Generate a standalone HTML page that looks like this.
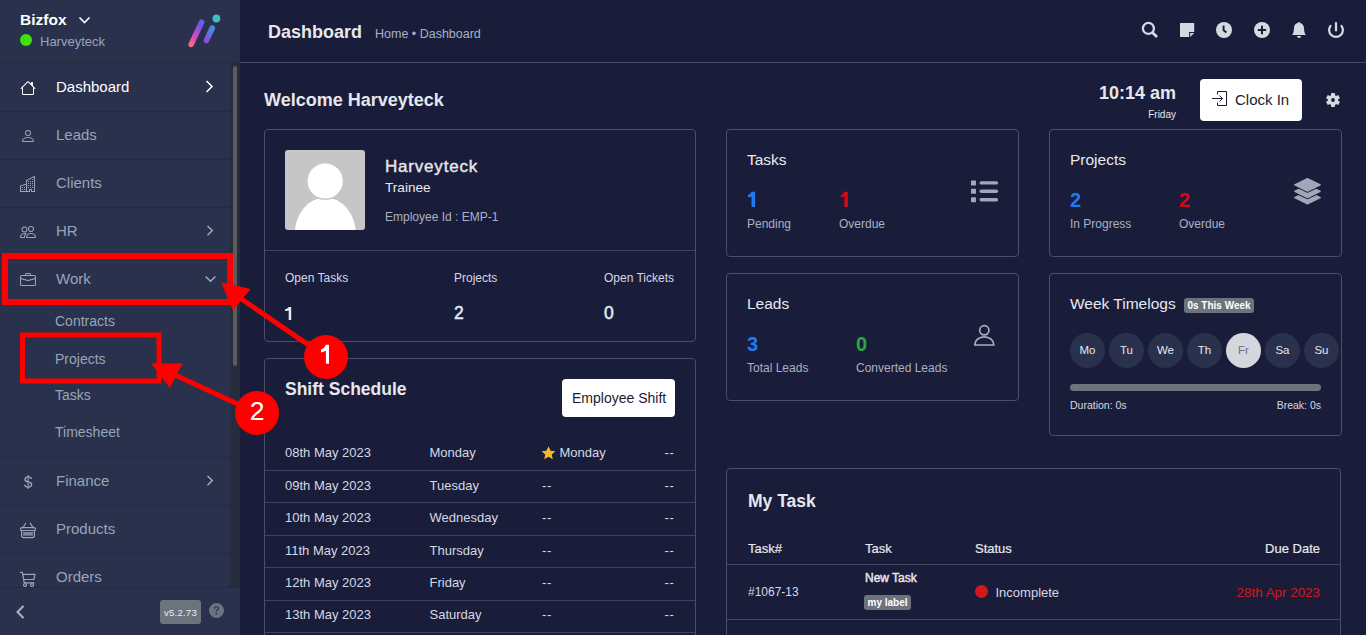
<!DOCTYPE html>
<html><head><meta charset="utf-8">
<style>
*{box-sizing:border-box;margin:0;padding:0}
html,body{width:1366px;height:635px;overflow:hidden;background:#1a1d39;font-family:"Liberation Sans",sans-serif;position:relative}
.a{position:absolute;white-space:nowrap;line-height:1}
svg{position:absolute;overflow:visible}
#sb{position:absolute;left:0;top:0;width:240px;height:635px;background:#29314d}
.sep{position:absolute;left:0;width:230px;height:1px;background:#252a3d}
.mt{position:absolute;left:56px;font-size:15px;line-height:1;color:#99a5b8;white-space:nowrap}
.st{position:absolute;left:55px;font-size:14px;line-height:1;color:#99a5b8;white-space:nowrap}
.ic{fill:#99a5b8}
.card{position:absolute;border:1px solid #4b4e6b;border-radius:4px}
.lt{color:#d5d8e4}
.ttl{font-size:15.5px;color:#e6e8ef}
.num{font-size:20px;font-weight:bold}
.lbl{font-size:12px;color:#a9b1c4}
.day{position:absolute;top:333px;width:35px;height:35px;border-radius:50%;background:#29314d;color:#e4e7ee;font-size:11.5px;line-height:34px;text-align:center}
.row{position:absolute;font-size:13px;color:#d5d8e4;line-height:1}
.rl{position:absolute;left:265px;width:430px;height:1px;background:#3c3f5c}
</style></head><body>
<div id="sb">
  <div class="a" style="left:20px;top:12px;font-size:15.5px;font-weight:bold;color:#fff">Bizfox</div>
  <svg style="left:78px;top:16px" width="13" height="9" viewBox="0 0 13 9"><path d="M1.5 1.5 L6.5 6.5 L11.5 1.5" fill="none" stroke="#fff" stroke-width="1.6"/></svg>
  <div class="a" style="left:20px;top:34px;width:12px;height:12px;border-radius:50%;background:#3ee10a"></div>
  <div class="a" style="left:40px;top:35px;font-size:13px;color:#99a5b8">Harveyteck</div>
  <!-- logo -->
  <svg style="left:180px;top:10px" width="50" height="42" viewBox="0 0 50 42">
    <defs>
      <linearGradient id="g1" x1="0" y1="1" x2="0.6" y2="0"><stop offset="0" stop-color="#f46b7a"/><stop offset="0.35" stop-color="#d948c0"/><stop offset="1" stop-color="#6a5ae6"/></linearGradient>
      <linearGradient id="g2" x1="0" y1="1" x2="0.6" y2="0"><stop offset="0" stop-color="#8a4ee0"/><stop offset="1" stop-color="#4a86e0"/></linearGradient>
    </defs>
    <line x1="11.2" y1="34.4" x2="21.6" y2="12.2" stroke="url(#g1)" stroke-width="5.6" stroke-linecap="round"/>
    <line x1="26.5" y1="30.4" x2="32.3" y2="18.0" stroke="url(#g2)" stroke-width="5.6" stroke-linecap="round"/>
    <circle cx="36.4" cy="8.5" r="3.9" fill="#3cc0c0"/>
  </svg>
  <div class="a" style="left:0;top:62px;width:240px;height:1px;background:#252a3a"></div>

  <!-- menu items -->
  <svg style="left:19.5px;top:79.5px" width="16" height="16" viewBox="0 0 16 16"><path fill="#fff" d="M8.707 1.5a1 1 0 0 0-1.414 0L.646 8.146a.5.5 0 0 0 .708.708L2 8.207V13.5A1.5 1.5 0 0 0 3.5 15h9a1.5 1.5 0 0 0 1.5-1.5V8.207l.646.647a.5.5 0 0 0 .708-.708L13 5.793V2.5a.5.5 0 0 0-.5-.5h-1a.5.5 0 0 0-.5.5v1.293L8.707 1.5ZM13 7.207V13.5a.5.5 0 0 1-.5.5h-9a.5.5 0 0 1-.5-.5V7.207l5-5 5 5Z"/></svg>
  <div class="mt" style="top:79px;color:#fff">Dashboard</div>
  <svg style="left:205px;top:80px" width="10" height="13" viewBox="0 0 10 13"><path d="M1.5 1 L7 6.5 L1.5 12" fill="none" stroke="#fff" stroke-width="1.5"/></svg>
  <div class="sep" style="top:111px"></div>

  <svg style="left:20px;top:128px" width="16" height="16" viewBox="0 0 16 16"><path class="ic" d="M8 8a3 3 0 1 0 0-6 3 3 0 0 0 0 6Zm2-3a2 2 0 1 1-4 0 2 2 0 0 1 4 0Zm4 8c0 1-1 1-1 1H3s-1 0-1-1 1-4 6-4 6 3 6 4Zm-1-.004c-.001-.246-.154-.986-.832-1.664C11.516 10.68 10.289 10 8 10c-2.29 0-3.516.68-4.168 1.332-.678.678-.83 1.418-.832 1.664h10Z"/></svg>
  <div class="mt" style="top:127px">Leads</div>
  <div class="sep" style="top:159px"></div>

  <svg style="left:20px;top:176px" width="16" height="16" viewBox="0 0 16 16"><path class="ic" d="M14.763.075A.5.5 0 0 1 15 .5v15a.5.5 0 0 1-.5.5h-3a.5.5 0 0 1-.5-.5V14h-1v1.5a.5.5 0 0 1-.5.5h-9a.5.5 0 0 1-.5-.5V10a.5.5 0 0 1 .342-.474L6 7.64V4.5a.5.5 0 0 1 .276-.447l8-4a.5.5 0 0 1 .487.022ZM6 8.694 1 10.36V15h5V8.694ZM7 15h2v-1.5a.5.5 0 0 1 .5-.5h2a.5.5 0 0 1 .5.5V15h2V1.309l-7 3.5V15Z"/><path class="ic" d="M2 11h1v1H2v-1Zm2 0h1v1H4v-1Zm-2 2h1v1H2v-1Zm2 0h1v1H4v-1Zm4-4h1v1H8V9Zm2 0h1v1h-1V9Zm-2 2h1v1H8v-1Zm2 0h1v1h-1v-1Zm2-2h1v1h-1V9Zm0 2h1v1h-1v-1ZM8 7h1v1H8V7Zm2 0h1v1h-1V7Zm2 0h1v1h-1V7ZM8 5h1v1H8V5Zm2 0h1v1h-1V5Zm2 0h1v1h-1V5Zm0-2h1v1h-1V3Z"/></svg>
  <div class="mt" style="top:175px">Clients</div>
  <div class="sep" style="top:207px"></div>

  <svg style="left:20px;top:224px" width="16" height="16" viewBox="0 0 16 16"><path class="ic" d="M15 14s1 0 1-1-1-4-5-4-5 3-5 4 1 1 1 1h8Zm-7.978-1A.261.261 0 0 1 7 12.996c.001-.264.167-1.03.76-1.72C8.312 10.629 9.282 10 11 10c1.717 0 2.687.63 3.24 1.276.593.69.758 1.457.76 1.72l-.008.002a.274.274 0 0 1-.014.002H7.022ZM11 7a2 2 0 1 0 0-4 2 2 0 0 0 0 4Zm3-2a3 3 0 1 1-6 0 3 3 0 0 1 6 0ZM6.936 9.28a5.88 5.88 0 0 0-1.23-.247A7.35 7.35 0 0 0 5 9c-4 0-5 3-5 4 0 .667.333 1 1 1h4.216A2.238 2.238 0 0 1 5 13c0-1.01.377-2.042 1.09-2.904.243-.294.526-.569.846-.816ZM4.92 10A5.493 5.493 0 0 0 4 13H1c0-.26.164-1.03.76-1.724.545-.636 1.492-1.256 3.16-1.275ZM1.5 5.5a3 3 0 1 1 6 0 3 3 0 0 1-6 0Zm3-2a2 2 0 1 0 0 4 2 2 0 0 0 0-4Z"/></svg>
  <div class="mt" style="top:223px">HR</div>
  <svg style="left:206px;top:225px" width="10" height="13" viewBox="0 0 10 13"><path d="M1.5 1 L6.3 5.6 L1.5 10.2" fill="none" stroke="#a3b0c4" stroke-width="1.4"/></svg>
  <div class="sep" style="top:255px"></div>

  <svg style="left:20px;top:272px" width="16" height="16" viewBox="0 0 16 16"><path class="ic" d="M6.5 1A1.5 1.5 0 0 0 5 2.5V3H1.5A1.5 1.5 0 0 0 0 4.5v8A1.5 1.5 0 0 0 1.5 14h13a1.5 1.5 0 0 0 1.5-1.5v-8A1.5 1.5 0 0 0 14.5 3H11v-.5A1.5 1.5 0 0 0 9.5 1h-3zm0 1h3a.5.5 0 0 1 .5.5V3H6v-.5a.5.5 0 0 1 .5-.5zm1.886 6.914L15 7.151V12.5a.5.5 0 0 1-.5.5h-13a.5.5 0 0 1-.5-.5V7.15l6.614 1.764a1.5 1.5 0 0 0 .772 0zM1.5 4h13a.5.5 0 0 1 .5.5v1.616L8.129 7.948a.5.5 0 0 1-.258 0L1 6.116V4.5a.5.5 0 0 1 .5-.5z"/></svg>
  <div class="mt" style="top:271px">Work</div>
  <svg style="left:203.5px;top:274.5px" width="14" height="9" viewBox="0 0 14 9"><path d="M1.6 1.5 L6.5 6.3 L11.4 1.5" fill="none" stroke="#a3b0c4" stroke-width="1.4"/></svg>

  <div class="st" style="top:314px">Contracts</div>
  <div class="st" style="top:352px">Projects</div>
  <div class="st" style="top:388px">Tasks</div>
  <div class="st" style="top:425px">Timesheet</div>
  <div class="sep" style="top:457px"></div>

  <svg style="left:20px;top:474px" width="16" height="16" viewBox="0 0 16 16"><path class="ic" d="M4 10.781c.148 1.667 1.513 2.85 3.591 3.003V15h1.043v-1.216c2.27-.179 3.678-1.438 3.678-3.3 0-1.59-.947-2.51-2.956-3.028l-.722-.187V3.467c1.122.11 1.879.714 2.07 1.616h1.47c-.166-1.6-1.54-2.748-3.54-2.875V1H7.591v1.233c-1.939.23-3.27 1.472-3.27 3.156 0 1.454.966 2.483 2.661 2.917l.61.162v4.031c-1.149-.17-1.94-.8-2.131-1.718H4zm3.391-3.836c-1.043-.263-1.6-.825-1.6-1.616 0-.944.704-1.641 1.8-1.828v3.495l-.2-.05zm1.591 1.872c1.287.323 1.852.859 1.852 1.769 0 1.097-.826 1.828-2.103 2.001V8.225l.251.063z"/></svg>
  <div class="mt" style="top:473px">Finance</div>
  <svg style="left:206px;top:475px" width="10" height="13" viewBox="0 0 10 13"><path d="M1.5 1 L6.3 5.6 L1.5 10.2" fill="none" stroke="#a3b0c4" stroke-width="1.4"/></svg>
  <div class="sep" style="top:505px"></div>

  <svg style="left:20px;top:522px" width="16" height="17" viewBox="0 0 16 17"><g fill="none" stroke="#99a5b8" stroke-width="1.2" stroke-linecap="round"><path d="M5.6 1.2 L3 5.7 M10.2 1.2 L13.1 5.7"/><rect x="0.6" y="5.7" width="14.8" height="2.8" rx="1"/><path d="M1.6 8.5 V13.6 a2 2 0 0 0 2 2 H12.4 a2 2 0 0 0 2 -2 V8.5"/></g><rect x="3.2" y="10" width="9.7" height="3.7" fill="#7d879b"/></svg>
  <div class="mt" style="top:521px">Products</div>
  <div class="sep" style="top:553px"></div>

  <svg style="left:20px;top:570px" width="16" height="18" viewBox="0 0 16 18"><g fill="none" stroke="#99a5b8" stroke-width="1.2" stroke-linejoin="round" stroke-linecap="round"><path d="M0.5 2.4 H2.4 L4.3 12.8 H14"/><path d="M3 4.4 H15 L13.8 9.5 H4"/><circle cx="5" cy="15.1" r="1.5"/><circle cx="12" cy="15.1" r="1.5"/></g></svg>
  <div class="mt" style="top:569px">Orders</div>

  <!-- scrollbar -->
  <div class="a" style="left:230px;top:63px;width:10px;height:525px;background:#262c3c"></div>
  <div class="a" style="left:233px;top:66px;width:4px;height:300px;border-radius:2px;background:#5c5c5c"></div>
  <!-- footer -->
  <div class="a" style="left:0;top:587px;width:240px;height:48px;background:#29314d;border-top:1px solid #252a3a"></div>
  <svg style="left:15px;top:604px" width="12" height="16" viewBox="0 0 12 16"><path d="M8.5 2 L2.5 8 L8.5 14" fill="none" stroke="#a8b4c8" stroke-width="2"/></svg>
  <div class="a" style="left:160px;top:600px;width:41px;height:24px;border-radius:3px;background:#6c737d;color:#eceef2;font-size:9.6px;letter-spacing:0.2px;line-height:25px;text-align:center">v5.2.73</div>
  <svg style="left:209px;top:603px" width="15" height="15" viewBox="0 0 16 16"><path fill="#6c737d" d="M16 8A8 8 0 1 1 0 8a8 8 0 0 1 16 0zM5.496 6.033h.825c.138 0 .248-.113.266-.25.09-.656.54-1.134 1.342-1.134.686 0 1.314.343 1.314 1.168 0 .635-.374.927-.965 1.371-.673.489-1.206 1.060-1.168 1.987l.003.217a.25.25 0 0 0 .25.246h.811a.25.25 0 0 0 .25-.25v-.105c0-.718.273-.927 1.010-1.486.609-.463 1.244-.977 1.244-2.056 0-1.511-1.276-2.241-2.673-2.241-1.267 0-2.655.59-2.750 2.286a.237.237 0 0 0 .241.247zm2.325 6.443c.61 0 1.029-.394 1.029-.927 0-.552-.42-.94-1.029-.94-.584 0-1.009.388-1.009.94 0 .533.425.927 1.010.927z"/></svg>
</div>

<!-- top header -->
<div class="a" style="left:240px;top:62px;width:1126px;height:1px;background:#4a4a6c"></div>
<div class="a" style="left:268px;top:23px;font-size:18px;font-weight:bold;color:#e6e6ec">Dashboard</div>
<div class="a" style="left:375px;top:28px;font-size:12.5px;color:#a9b1c4">Home • Dashboard</div>

<svg style="left:1141px;top:21px" width="18" height="18" viewBox="0 0 18 18"><g fill="none" stroke="#d6d8e2"><circle cx="7.4" cy="7.4" r="5.5" stroke-width="2.3"/><path d="M11.4 11.4 L16 16" stroke-width="2.8"/></g></svg>
<svg style="left:1179px;top:22px" width="16" height="16" viewBox="1179 22 16 16"><path fill="#d6d8e2" d="M1180 23.4 Q1180 23 1180.4 23 H1193.8 Q1194.2 23 1194.2 23.4 V32 H1189.1 V37.1 H1180.4 Q1180 37.1 1180 36.7 Z"/><path fill="#d6d8e2" d="M1190.2 33.1 H1194.2 L1190.2 37.1 Z"/></svg>
<svg style="left:1216px;top:22px" width="16" height="16" viewBox="0 0 16 16"><circle cx="8" cy="8" r="8" fill="#d6d8e2"/><path d="M7.6 3.6 V8.3 L10.4 10.6" fill="none" stroke="#1a1d39" stroke-width="1.9"/></svg>
<svg style="left:1254px;top:22px" width="16" height="16" viewBox="0 0 16 16"><circle cx="8" cy="8" r="8" fill="#d6d8e2"/><path d="M8 3.8 V12.2 M3.8 8 H12.2" fill="none" stroke="#1a1d39" stroke-width="2"/></svg>
<svg style="left:1291px;top:22px" width="16" height="16" viewBox="0 0 16 16"><path fill="#d6d8e2" d="M8 16a2 2 0 0 0 2-2H6a2 2 0 0 0 2 2zm.995-14.901a1 1 0 1 0-1.99 0A5.002 5.002 0 0 0 3 6c0 1.098-.5 6-2 7h14c-1.5-1-2-5.902-2-7 0-2.42-1.72-4.44-4.005-4.901z"/></svg>
<svg style="left:1328px;top:22px" width="16" height="16" viewBox="0 0 16 16"><g fill="none" stroke="#d6d8e2" stroke-width="2.2" stroke-linecap="round"><path d="M2.5 3.85 A6.9 6.9 0 1 0 13.5 3.85"/><path d="M8 1.1 V8.4"/></g></svg>

<div class="a" style="left:264px;top:91px;font-size:18px;font-weight:bold;color:#e6e6ec">Welcome Harveyteck</div>

<div class="a" style="right:190px;top:84px;font-size:18px;font-weight:bold;color:#e6e6ec">10:14 am</div>
<div class="a" style="right:190px;top:110px;font-size:10px;color:#e6e6ec">Friday</div>
<div class="a" style="left:1200px;top:79px;width:102px;height:42px;border-radius:4px;background:#fff"></div>
<svg style="left:1211px;top:90px" width="17" height="17" viewBox="0 0 17 17"><g fill="none" stroke="#1b1c35" stroke-width="1"><path d="M6.5 4.5 V1.5 H15.5 V15.5 H6.5 V12.5"/><path d="M1 8.5 H11.5 M8.5 5.5 L11.5 8.5 L8.5 11.5"/></g></svg>
<div class="a" style="left:1235px;top:92px;font-size:15px;color:#1b1c35">Clock In</div>
<svg style="left:1326px;top:93px" width="14" height="14" viewBox="-7 -7 14 14"><g fill="#d6d8e2"><circle r="5.2"/><rect x="-1.9" y="-7" width="3.8" height="14" rx="0.6" transform="rotate(0)"/><rect x="-1.9" y="-7" width="3.8" height="14" rx="0.6" transform="rotate(60)"/><rect x="-1.9" y="-7" width="3.8" height="14" rx="0.6" transform="rotate(120)"/></g><circle r="1.9" fill="#1a1d39"/></svg>

<!-- cards -->
<div class="card" style="left:264px;top:129px;width:432px;height:213px"></div>
<div class="card" style="left:264px;top:358px;width:432px;height:300px"></div>
<div class="card" style="left:726px;top:129px;width:293px;height:128px"></div>
<div class="card" style="left:1049px;top:129px;width:293px;height:128px"></div>
<div class="card" style="left:726px;top:273px;width:293px;height:128px"></div>
<div class="card" style="left:1049px;top:273px;width:293px;height:163px"></div>
<div class="card" style="left:726px;top:468px;width:615px;height:200px"></div>

<div id="content">
<svg style="left:285px;top:150px" width="80" height="80" viewBox="0 0 80 80"><defs><clipPath id="av"><rect width="80" height="80" rx="3"/></clipPath></defs><g clip-path="url(#av)"><rect width="80" height="80" fill="#c6c6c6"/><ellipse cx="40.3" cy="84" rx="30.5" ry="36.5" fill="#fff"/><circle cx="40.2" cy="31" r="18.3" fill="#fff" stroke="#c6c6c6" stroke-width="1.4"/></g></svg>
<div class="a" style="left:385px;top:157.68px;font-size:17px;color:#e6e8ef;letter-spacing:0.8px;-webkit-text-stroke:0.4px #e6e8ef">Harveyteck</div>
<div class="a" style="left:385px;top:181.03px;font-size:13.6px;color:#e6e8ef">Trainee</div>
<div class="a" style="left:385px;top:210.73px;font-size:12px;color:#a9b1c4">Employee Id : EMP-1</div>
<div class="a" style="left:265px;top:250px;width:430px;height:1px;background:#3f4260"></div>
<div class="a" style="left:285px;top:271.93px;font-size:12px;color:#d5d8e4">Open Tasks</div>
<svg style="left:0;top:0" width="1366" height="635" viewBox="0 0 1366 635"><path fill="#e6e8ef" d="M288.7 306.9 H291.2 V319.9 H288.7 V310.4 Q287 311.1 285.1 311.1 V309.2 Q287.7 308.7 288.7 306.9 Z"/></svg>
<div class="a" style="left:454px;top:271.93px;font-size:12px;color:#d5d8e4">Projects</div>
<div class="a" style="left:454px;top:305.32px;font-size:17.5px;color:#e6e8ef;-webkit-text-stroke:0.5px #e6e8ef">2</div>
<div class="a" style="left:604px;top:271.93px;font-size:12px;color:#d5d8e4">Open Tickets</div>
<div class="a" style="left:604px;top:305.32px;font-size:17.5px;color:#e6e8ef;-webkit-text-stroke:0.5px #e6e8ef">0</div>
<div class="a" style="left:285px;top:381.12px;font-size:17.5px;color:#e6e8ef;font-weight:bold">Shift Schedule</div>
<div class="a" style="left:562px;top:379px;width:113px;height:38px;border-radius:4px;background:#fff"></div>
<div class="a" style="left:572px;top:391.47px;font-size:14px;color:#1b1c35">Employee Shift</div>
<div class="a" style="left:285px;top:445.90px;font-size:13px;color:#d5d8e4">08th May 2023</div>
<div class="a" style="left:429.5px;top:445.90px;font-size:13px;color:#d5d8e4">Monday</div>
<svg style="left:541px;top:445.5px" width="15" height="14" viewBox="0 0 16 15"><path fill="#f6b81e" d="M8 0.4 L10.2 5.1 L15.4 5.6 L11.5 9.1 L12.6 14.3 L8 11.6 L3.4 14.3 L4.5 9.1 L0.6 5.6 L5.8 5.1 Z"/></svg>
<div class="a" style="left:559.4px;top:445.90px;font-size:13px;color:#d5d8e4">Monday</div>
<div class="a" style="left:664.5px;top:445.90px;font-size:13px;color:#d5d8e4;letter-spacing:0.6px">--</div>
<div class="a" style="left:265px;top:470px;width:430px;height:1px;background:#3f4260"></div>
<div class="a" style="left:285px;top:479.00px;font-size:13px;color:#d5d8e4">09th May 2023</div>
<div class="a" style="left:429.5px;top:479.00px;font-size:13px;color:#d5d8e4">Tuesday</div>
<div class="a" style="left:542px;top:479.00px;font-size:13px;color:#d5d8e4;letter-spacing:0.6px">--</div>
<div class="a" style="left:664.5px;top:479.00px;font-size:13px;color:#d5d8e4;letter-spacing:0.6px">--</div>
<div class="a" style="left:265px;top:502px;width:430px;height:1px;background:#3f4260"></div>
<div class="a" style="left:285px;top:511.10px;font-size:13px;color:#d5d8e4">10th May 2023</div>
<div class="a" style="left:429.5px;top:511.10px;font-size:13px;color:#d5d8e4">Wednesday</div>
<div class="a" style="left:542px;top:511.10px;font-size:13px;color:#d5d8e4;letter-spacing:0.6px">--</div>
<div class="a" style="left:664.5px;top:511.10px;font-size:13px;color:#d5d8e4;letter-spacing:0.6px">--</div>
<div class="a" style="left:265px;top:535px;width:430px;height:1px;background:#3f4260"></div>
<div class="a" style="left:285px;top:544.00px;font-size:13px;color:#d5d8e4">11th May 2023</div>
<div class="a" style="left:429.5px;top:544.00px;font-size:13px;color:#d5d8e4">Thursday</div>
<div class="a" style="left:542px;top:544.00px;font-size:13px;color:#d5d8e4;letter-spacing:0.6px">--</div>
<div class="a" style="left:664.5px;top:544.00px;font-size:13px;color:#d5d8e4;letter-spacing:0.6px">--</div>
<div class="a" style="left:265px;top:567px;width:430px;height:1px;background:#3f4260"></div>
<div class="a" style="left:285px;top:576.10px;font-size:13px;color:#d5d8e4">12th May 2023</div>
<div class="a" style="left:429.5px;top:576.10px;font-size:13px;color:#d5d8e4">Friday</div>
<div class="a" style="left:542px;top:576.10px;font-size:13px;color:#d5d8e4;letter-spacing:0.6px">--</div>
<div class="a" style="left:664.5px;top:576.10px;font-size:13px;color:#d5d8e4;letter-spacing:0.6px">--</div>
<div class="a" style="left:265px;top:600px;width:430px;height:1px;background:#3f4260"></div>
<div class="a" style="left:285px;top:608.30px;font-size:13px;color:#d5d8e4">13th May 2023</div>
<div class="a" style="left:429.5px;top:608.30px;font-size:13px;color:#d5d8e4">Saturday</div>
<div class="a" style="left:542px;top:608.30px;font-size:13px;color:#d5d8e4;letter-spacing:0.6px">--</div>
<div class="a" style="left:664.5px;top:608.30px;font-size:13px;color:#d5d8e4;letter-spacing:0.6px">--</div>
<div class="a" style="left:265px;top:632px;width:430px;height:1px;background:#3f4260"></div>
<div class="a" style="left:747px;top:151.98px;font-size:15.5px;color:#e6e8ef">Tasks</div>
<svg style="left:0;top:0" width="1366" height="635" viewBox="0 0 1366 635"><path fill="#1f7af4" d="M751.5 191.8 H755.1 V207.1 H751.5 V196.6 Q750 197.3 747.9 197.3 V195 Q750.6 194.6 751.5 191.8 Z"/><path fill="#d2091a" d="M844.3 191.8 H847.9 V207.1 H844.3 V196.6 Q842.8 197.3 840.7 197.3 V195 Q843.4 194.6 844.3 191.8 Z"/></svg>
<div class="a" style="left:747px;top:218.33px;font-size:12px;color:#a9b1c4">Pending</div>
<div class="a" style="left:839px;top:218.33px;font-size:12px;color:#a9b1c4">Overdue</div>
<svg style="left:971px;top:180px" width="28" height="23" viewBox="0 0 28 23"><g fill="#a0a8b8"><rect x="0" y="0.4" width="5" height="5" rx=".6"/><rect x="0" y="8.8" width="5" height="5" rx=".6"/><rect x="0" y="17.2" width="5" height="5" rx=".6"/><rect x="8.5" y="1.2" width="18.6" height="3.4" rx="1.7"/><rect x="8.5" y="9.6" width="18.6" height="3.4" rx="1.7"/><rect x="8.5" y="18" width="18.6" height="3.4" rx="1.7"/></g></svg>
<div class="a" style="left:1070px;top:151.98px;font-size:15.5px;color:#e6e8ef">Projects</div>
<div class="a" style="left:1070px;top:189.59px;font-size:20px;color:#1f7af4;font-weight:bold">2</div>
<div class="a" style="left:1179px;top:189.59px;font-size:20px;color:#d2091a;font-weight:bold">2</div>
<div class="a" style="left:1070px;top:218.33px;font-size:12px;color:#a9b1c4">In Progress</div>
<div class="a" style="left:1179px;top:218.33px;font-size:12px;color:#a9b1c4">Overdue</div>
<svg style="left:1293px;top:177px" width="29" height="29" viewBox="0 0 29 29"><path d="M14.5 14.4 L27.2 20.6 L14.5 26.8 L1.8 20.6 Z" fill="#1a1d39" stroke="#1a1d39" stroke-width="3.6" stroke-linejoin="round"/><path d="M14.5 14.4 L27.2 20.6 L14.5 26.8 L1.8 20.6 Z" fill="#a0a8b8" stroke="#a0a8b8" stroke-width="1.4" stroke-linejoin="round"/><path d="M14.5 8.1 L27.2 14.3 L14.5 20.5 L1.8 14.3 Z" fill="#1a1d39" stroke="#1a1d39" stroke-width="3.6" stroke-linejoin="round"/><path d="M14.5 8.1 L27.2 14.3 L14.5 20.5 L1.8 14.3 Z" fill="#a0a8b8" stroke="#a0a8b8" stroke-width="1.4" stroke-linejoin="round"/><path d="M14.5 1.6 L27.2 7.8 L14.5 14.0 L1.8 7.8 Z" fill="#1a1d39" stroke="#1a1d39" stroke-width="3.6" stroke-linejoin="round"/><path d="M14.5 1.6 L27.2 7.8 L14.5 14.0 L1.8 7.8 Z" fill="#a0a8b8" stroke="#a0a8b8" stroke-width="1.4" stroke-linejoin="round"/></svg>
<div class="a" style="left:747px;top:295.98px;font-size:15.5px;color:#e6e8ef">Leads</div>
<div class="a" style="left:747px;top:333.69px;font-size:20px;color:#1f7af4;font-weight:bold">3</div>
<div class="a" style="left:856px;top:333.69px;font-size:20px;color:#28a745;font-weight:bold">0</div>
<div class="a" style="left:747px;top:361.93px;font-size:12px;color:#a9b1c4">Total Leads</div>
<div class="a" style="left:856px;top:361.93px;font-size:12px;color:#a9b1c4">Converted Leads</div>
<svg style="left:973px;top:324px" width="23" height="23" viewBox="0 0 23 23"><g fill="none" stroke="#a8b0c0" stroke-width="1.7"><circle cx="11.3" cy="6.3" r="4.6"/><path d="M1.7 21 H20.9 A9.6 8.2 0 0 0 1.7 21 Z" stroke-linejoin="round"/></g></svg>
<div class="a" style="left:1070px;top:296.18px;font-size:15.5px;color:#e6e8ef">Week Timelogs</div>
<div class="a" style="left:1184px;top:298px;width:70px;height:15px;border-radius:3px;background:#6c737d;color:#fff;font-size:10px;font-weight:bold;line-height:15px;text-align:center">0s This Week</div>
<div class="day" style="left:1070px">Mo</div>
<div class="day" style="left:1109px">Tu</div>
<div class="day" style="left:1148px">We</div>
<div class="day" style="left:1187px">Th</div>
<div class="day" style="left:1226px;background:#d5d7df;color:#6b7280">Fr</div>
<div class="day" style="left:1265px">Sa</div>
<div class="day" style="left:1304px">Su</div>
<div class="a" style="left:1070px;top:384px;width:251px;height:7px;border-radius:3.5px;background:#6c737a"></div>
<div class="a" style="left:1070px;top:399.83px;font-size:10.5px;color:#d5d8e4">Duration: 0s</div>
<div class="a" style="right:45px;top:399.83px;font-size:10.5px;color:#d5d8e4">Break: 0s</div>
<div class="a" style="left:748px;top:492.92px;font-size:17.5px;color:#e6e8ef;font-weight:bold">My Task</div>
<div class="a" style="left:748px;top:542.20px;font-size:13px;color:#e6e8ef;-webkit-text-stroke:0.2px #e6e8ef">Task#</div>
<div class="a" style="left:865px;top:542.20px;font-size:13px;color:#e6e8ef;-webkit-text-stroke:0.2px #e6e8ef">Task</div>
<div class="a" style="left:975px;top:542.20px;font-size:13px;color:#e6e8ef;-webkit-text-stroke:0.2px #e6e8ef">Status</div>
<div class="a" style="right:46px;top:542.20px;font-size:13px;color:#e6e8ef;-webkit-text-stroke:0.2px #e6e8ef">Due Date</div>
<div class="a" style="left:727px;top:564px;width:613px;height:1px;background:#464965"></div>
<div class="a" style="left:748px;top:585.83px;font-size:12px;color:#d5d8e4">#1067-13</div>
<div class="a" style="left:865px;top:572.13px;font-size:12px;color:#e6e8ef;-webkit-text-stroke:0.45px #e6e8ef">New Task</div>
<div class="a" style="left:864px;top:595px;width:47px;height:15px;border-radius:3px;background:#6c737d;color:#fff;font-size:10px;font-weight:bold;line-height:15px;text-align:center">my label</div>
<div class="a" style="left:975px;top:585px;width:13px;height:13px;border-radius:50%;background:#d5161b"></div>
<div class="a" style="left:995.5px;top:585.70px;font-size:13px;color:#d5d8e4">Incomplete</div>
<div class="a" style="right:46px;top:585.65px;font-size:13.4px;color:#d6161d">28th Apr 2023</div>
<div class="a" style="left:727px;top:619px;width:613px;height:1px;background:#464965"></div>
</div>
<div id="overlay"><svg style="left:0;top:0" width="1366" height="635" viewBox="0 0 1366 635">
<g fill="none" stroke="#ff0000">
<rect x="5" y="256" width="225" height="46" stroke-width="6"/>
<rect x="22.5" y="335" width="136.5" height="46" stroke-width="5"/>
<path d="M240 298 L326 357" stroke-width="5"/>
<path d="M175 375 L257 413" stroke-width="5"/>
</g>
<g fill="#ff0000">
<path d="M221.3 282.3 L250.6 288.9 L232.7 310.6 Z"/>
<path d="M151.3 363.5 L182.6 363.5 L169.8 388 Z"/>
<circle cx="326" cy="357" r="22"/>
<circle cx="257" cy="413" r="22"/>
</g>
</svg>
<svg style="left:0;top:0" width="1366" height="635" viewBox="0 0 1366 635"><path fill="#fff" d="M325.9 344.8 H329 V363.8 H325.9 V350.8 Q323.8 352.2 321 352.4 V349.6 Q324.6 348.4 325.9 344.8 Z"/></svg>
<div class="a" style="left:235px;top:397.5px;width:44px;text-align:center;font-size:26.5px;color:#fff">2</div>
</div>
</body></html>
